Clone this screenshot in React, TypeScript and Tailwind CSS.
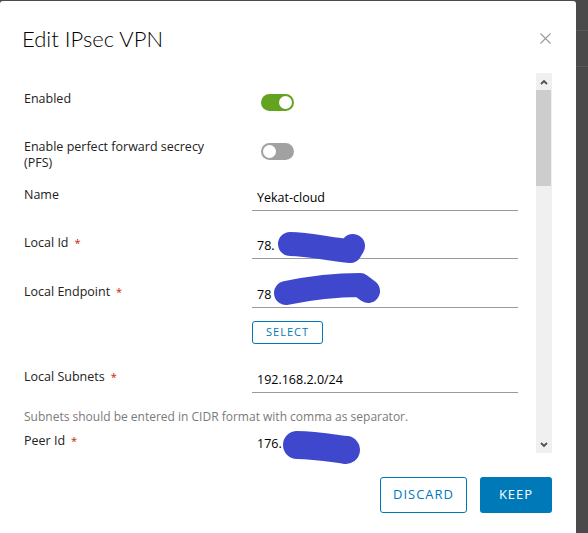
import React from "react";

const font = { fontFamily: "'Open Sans', 'Noto Sans', sans-serif" };
const titleFont = { fontFamily: "Lato, 'Open Sans', sans-serif" };

function Toggle({ on }: { on: boolean }) {
  return on ? (
    <div className="w-[33px] h-[17px] rounded-full bg-[#62a420] flex items-center justify-end pr-[2px]">
      <div className="w-[13px] h-[13px] rounded-full bg-white" />
    </div>
  ) : (
    <div className="w-[33px] h-[17px] rounded-full bg-[#a1a1a1] flex items-center justify-start pl-[2px]">
      <div className="w-[13px] h-[13px] rounded-full bg-white" />
    </div>
  );
}

function Label({ text, req }: { text: string; req?: boolean }) {
  return (
    <div className="w-[228px] shrink-0">
      <div className="max-w-[200px] text-[12.5px] leading-[16px] text-[#222]">
        {text}
        {req && <span className="text-[#c92100] text-[11px] ml-[6px] align-top">*</span>}
      </div>
    </div>
  );
}

function Input({ value }: { value: string }) {
  return (
    <div className="w-[266px] h-[24px] border-b border-[#9a9a9a] flex items-center pl-[5px] text-[12.5px] text-black">
      {value}
    </div>
  );
}

export default function App() {
  return (
    <div className="relative w-[588px] h-[533px] bg-[#4a4a4a] overflow-hidden flex" style={font}>
      <div className="w-[576px] mt-[1px] bg-white rounded-t-[3px] flex flex-col shrink-0">
        {/* header */}
        <div className="flex items-start justify-between pl-[22px] pr-[25px] pt-[24px] h-[72px]">
          <div className="text-[22px] font-light text-black leading-[27px]" style={titleFont}>Edit IPsec VPN</div>
          <svg width="11" height="11" viewBox="0 0 11 11" className="mt-[8px]">
            <path d="M0.5 0.5 L10.5 10.5 M10.5 0.5 L0.5 10.5" stroke="#9a9a9a" strokeWidth="1.1" />
          </svg>
        </div>
        {/* body */}
        <div className="flex h-[380px] pl-[24px] pr-[24px]">
          <div className="flex-1 overflow-hidden flex flex-col">
            <div className="flex items-start mt-[18px]">
              <Label text="Enabled" />
              <div className="ml-[9px] mt-[3px]"><Toggle on /></div>
            </div>
            <div className="flex items-start mt-[28px]">
              <Label text="Enable perfect forward secrecy (PFS)" />
              <div className="ml-[9px] mt-[4px]"><Toggle on={false} /></div>
            </div>
            <div className="flex items-start mt-[16px]">
              <Label text="Name" />
              <Input value="Yekat-cloud" />
            </div>
            <div className="flex items-start mt-[24px]">
              <Label text="Local Id" req />
              <Input value="78." />
            </div>
            <div className="flex items-start mt-[25px]">
              <Label text="Local Endpoint" req />
              <Input value="78" />
            </div>
            <div className="flex mt-[13px]">
              <div className="w-[228px] shrink-0" />
              <div className="w-[71px] h-[23px] border border-[#0079b8] rounded-[3px] flex items-center justify-center text-[11px] tracking-[1px] text-[#0079b8]">
                SELECT
              </div>
            </div>
            <div className="flex items-start mt-[25px]">
              <Label text="Local Subnets" req />
              <Input value="192.168.2.0/24" />
            </div>
            <div className="mt-[16px] text-[12px] leading-[16px] text-[#7a7a7a]">
              Subnets should be entered in CIDR format with comma as separator.
            </div>
            <div className="flex items-start mt-[8px]">
              <Label text="Peer Id" req />
              <Input value="176." />
            </div>
          </div>
          {/* scrollbar */}
          <div className="w-[16px] shrink-0 bg-[#f0f0f0] flex flex-col">
            <div className="h-[17px] flex items-center justify-center">
              <svg width="8" height="6" viewBox="0 0 8 6">
                <path d="M1 5 L4 2 L7 5" stroke="#505050" strokeWidth="1.8" fill="none" />
              </svg>
            </div>
            <div className="w-[15px] h-[96px] bg-[#cdcdcd]" />
            <div className="flex-1" />
            <div className="h-[17px] flex items-center justify-center">
              <svg width="8" height="6" viewBox="0 0 8 6">
                <path d="M1 1 L4 4 L7 1" stroke="#505050" strokeWidth="1.8" fill="none" />
              </svg>
            </div>
          </div>
        </div>
        {/* footer */}
        <div className="flex justify-end gap-[13px] pr-[24px] mt-[24px]">
          <div className="w-[87px] h-[36px] border border-[#0079b8] rounded-[3px] flex items-center justify-center text-[13px] tracking-[1px] text-[#0079b8]">
            DISCARD
          </div>
          <div className="w-[72px] h-[36px] bg-[#0079b8] rounded-[3px] flex items-center justify-center text-[13px] tracking-[1px] text-white">
            KEEP
          </div>
        </div>
      </div>
      <div className="flex-1 flex flex-col">
        <div className="h-[31px] border-b border-[#585858]" />
        <div className="h-[36px] border-b border-[#585858]" />
      </div>
      {/* redaction scribbles */}
      <svg className="absolute inset-0 pointer-events-none" width="588" height="533" viewBox="0 0 588 533">
        <g stroke="#3f48cc" strokeLinecap="round" strokeLinejoin="round" fill="none">
          <path d="M290 244 C 310 244, 332 250, 350 251 L 353 246" strokeWidth="24" />
          <path d="M286 293 C 310 288, 340 285, 360 285 L 368 291" strokeWidth="24" />
          <path d="M297 445 C 314 445, 331 448, 346 450" strokeWidth="28" />
        </g>
      </svg>
    </div>
  );
}
